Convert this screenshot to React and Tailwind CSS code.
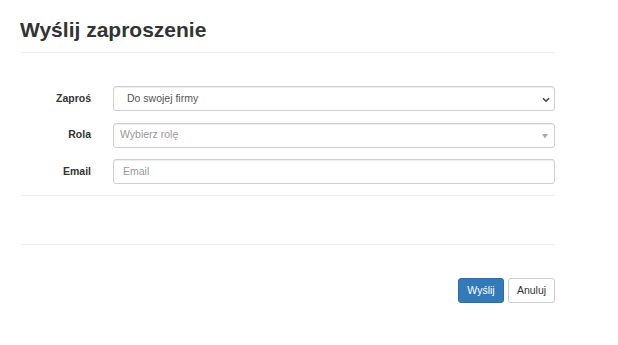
import React from "react";

export default function App() {
  const inputCls =
    "flex-1 h-full rounded-[3px] border border-[#cfcfcf] bg-white shadow-[inset_0_1px_1px_rgba(0,0,0,0.075)] flex items-center text-[10.5px] relative";
  return (
    <div className="w-[555px] pl-5 pt-[18px] font-['Liberation_Sans',Arial,sans-serif] text-[#333] bg-white">
      <div className="pb-[11px] border-b border-[#eee]">
        <h2 className="text-[21px] font-bold leading-[23px] m-0">Wyślij zaproszenie</h2>
      </div>
      <div className="pt-[33px] pb-[11px] border-b border-[#eee] flex flex-col gap-[11.5px]">
        <div className="flex items-center h-[25px]">
          <label className="w-[71px] text-right font-bold text-[10.5px]">Zaproś</label>
          <div className="w-[22px]" />
          <div className={inputCls}>
            <span className="pl-[13px] text-[#555]">Do swojej firmy</span>
            <svg className="absolute right-[4px] top-[10px]" width="8" height="6" viewBox="0 0 8 6">
              <path d="M1 1.2 L4 4.2 L7 1.2" fill="none" stroke="#444" strokeWidth="1.6" />
            </svg>
          </div>
        </div>
        <div className="flex items-center h-[25px]">
          <label className="w-[71px] text-right font-bold text-[10.5px]">Rola</label>
          <div className="w-[22px]" />
          <div className={inputCls}>
            <span className="pl-[6px] text-[#999]">Wybierz rolę</span>
            <svg className="absolute right-[6px] top-[10px]" width="6" height="5" viewBox="0 0 6 5">
              <path d="M0 0 L6 0 L3 4.5 Z" fill="#aaa" />
            </svg>
          </div>
        </div>
        <div className="flex items-center h-[25px]">
          <label className="w-[71px] text-right font-bold text-[10.5px]">Email</label>
          <div className="w-[22px]" />
          <div className={inputCls}>
            <span className="pl-[9px] text-[#999]">Email</span>
          </div>
        </div>
      </div>
      <div className="h-[49px] border-b border-[#eee]" />
      <div className="mt-[33px] flex justify-end gap-[4px]">
        <button className="h-[25px] w-[46px] rounded-[3px] bg-[#337ab7] border border-[#2e6da4] text-white text-[10.5px]">
          Wyślij
        </button>
        <button className="h-[25px] w-[47px] rounded-[3px] bg-white border border-[#ccc] text-[#333] text-[10.5px]">
          Anuluj
        </button>
      </div>
    </div>
  );
}
